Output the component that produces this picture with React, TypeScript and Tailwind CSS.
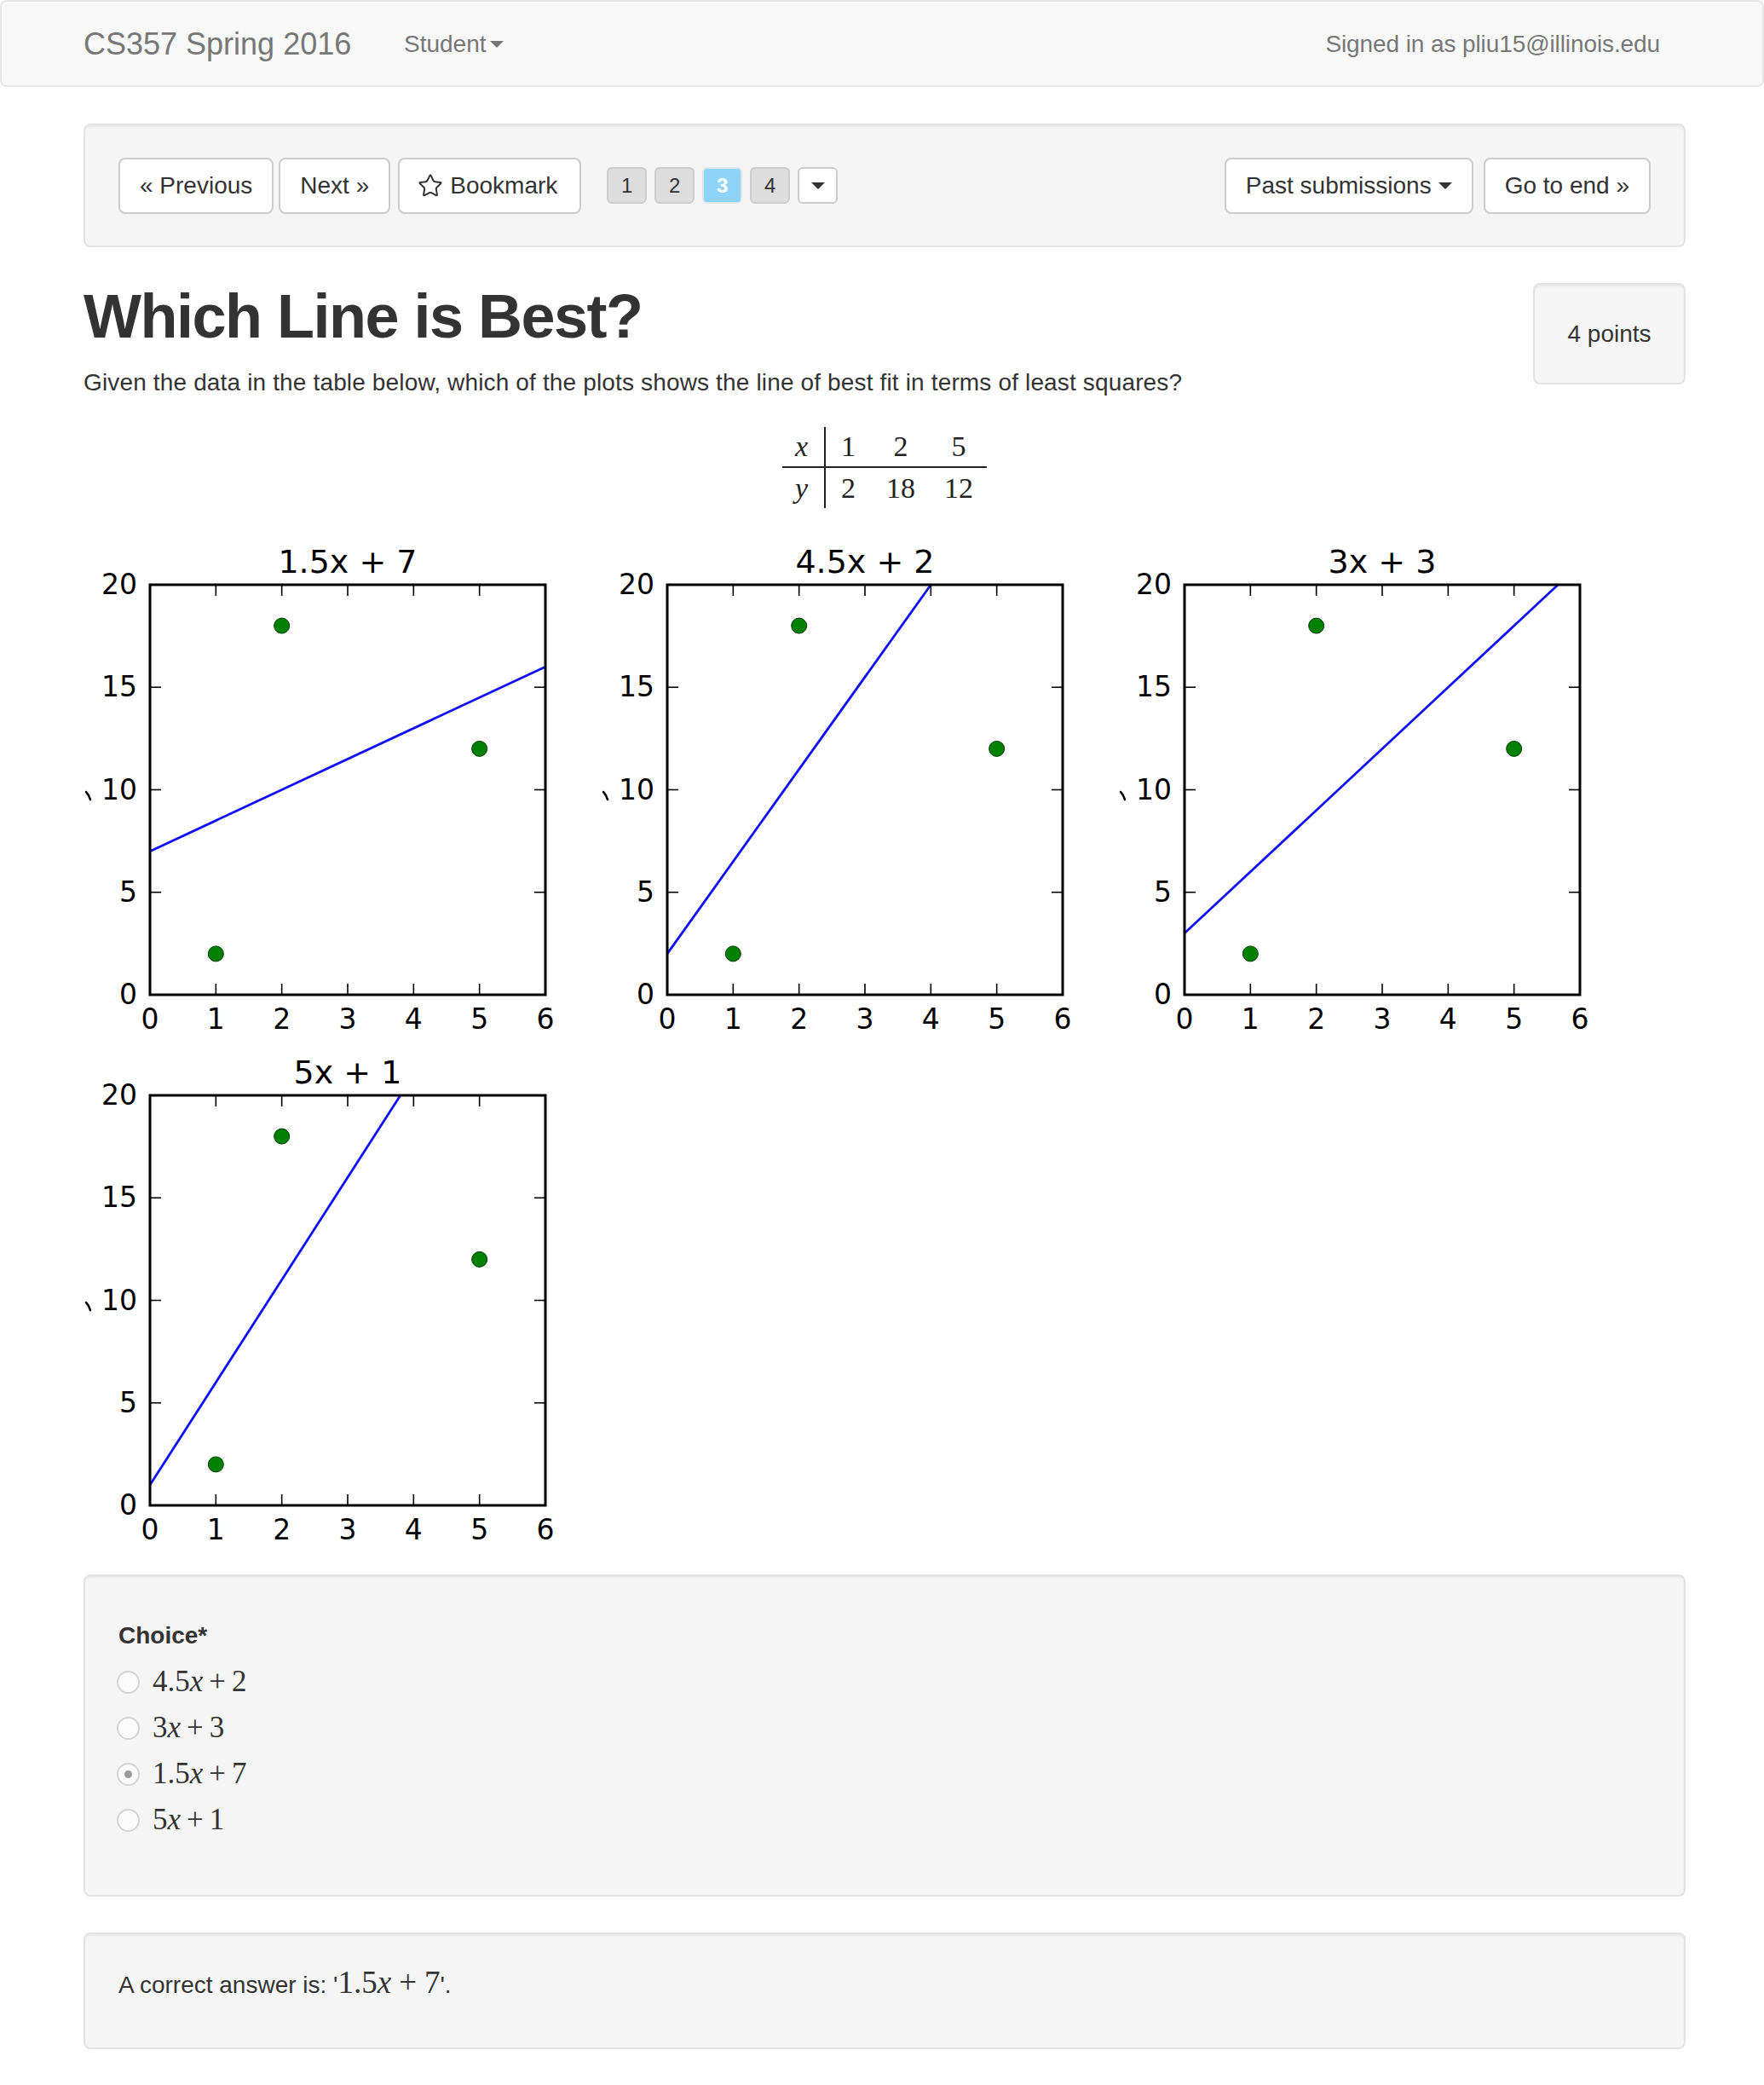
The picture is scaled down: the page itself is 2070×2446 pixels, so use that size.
import { Star } from "lucide-react";

const sans = "font-['Liberation_Sans',Arial,sans-serif]";
const serif = "font-['Liberation_Serif','Times_New_Roman',serif]";

// axes box inside each plot image (image is 607 x 599)
const AX = { x0: 78, x1: 542, y0: 58, y1: 539 };
const sx = (x: number) => AX.x0 + (x / 6) * (AX.x1 - AX.x0);
const sy = (y: number) => AX.y1 - (y / 20) * (AX.y1 - AX.y0);
const data = [
  [1, 2],
  [2, 18],
  [5, 12],
];

function Plot({ title, m, b }: { title: string; m: number; b: number }) {
  const xEnd = Math.min(6, (20 - b) / m);
  const font = "DejaVu Sans, sans-serif";
  return (
    <svg width={607} height={599} viewBox="0 0 607 599" className="block shrink-0">
      <text x={310} y={44} textAnchor="middle" fontSize={38} fontFamily={font} fill="#000">
        {title}
      </text>
      <rect x={AX.x0} y={AX.y0} width={AX.x1 - AX.x0} height={AX.y1 - AX.y0} fill="#fff" />
      <line x1={sx(0)} y1={sy(b)} x2={sx(xEnd)} y2={sy(m * xEnd + b)} stroke="#1010ff" strokeWidth={2.8} />
      {data.map(([x, y]) => (
        <circle key={x} cx={sx(x)} cy={sy(y)} r={9} fill="#008000" stroke="#003a00" strokeWidth={1} />
      ))}
      {[0, 1, 2, 3, 4, 5, 6].map((t) => (
        <g key={"x" + t}>
          <line x1={sx(t)} y1={AX.y1} x2={sx(t)} y2={AX.y1 - 13} stroke="#000" strokeWidth={1.6} />
          <line x1={sx(t)} y1={AX.y0} x2={sx(t)} y2={AX.y0 + 13} stroke="#000" strokeWidth={1.6} />
          <text x={sx(t)} y={579} textAnchor="middle" fontSize={33} fontFamily={font} fill="#000">
            {t}
          </text>
        </g>
      ))}
      {[0, 5, 10, 15, 20].map((t) => (
        <g key={"y" + t}>
          <line x1={AX.x0} y1={sy(t)} x2={AX.x0 + 13} y2={sy(t)} stroke="#000" strokeWidth={1.6} />
          <line x1={AX.x1} y1={sy(t)} x2={AX.x1 - 13} y2={sy(t)} stroke="#000" strokeWidth={1.6} />
          <text x={63} y={sy(t) + 11} textAnchor="end" fontSize={33} fontFamily={font} fill="#000">
            {t}
          </text>
        </g>
      ))}
      <rect
        x={AX.x0}
        y={AX.y0}
        width={AX.x1 - AX.x0}
        height={AX.y1 - AX.y0}
        fill="none"
        stroke="#000"
        strokeWidth={3}
      />
      {/* clipped y label */}
      <path d="M3 301 Q6 304 8 310" stroke="#000" strokeWidth={2.5} fill="none" strokeLinecap="round" />
    </svg>
  );
}

function Caret({ className = "" }: { className?: string }) {
  return (
    <span
      className={`inline-block h-0 w-0 border-x-[8px] border-t-[8px] border-x-transparent border-t-current ${className}`}
    />
  );
}

function Btn({ children, className = "" }: { children: React.ReactNode; className?: string }) {
  return (
    <button
      className={`flex h-[66px] items-center rounded-[8px] border-2 border-[#ccc] bg-white px-[23px] text-[28px] leading-[40px] text-[#333] ${className}`}
    >
      {children}
    </button>
  );
}

function Expr({ a, tail, big = false }: { a: string; tail: string; big?: boolean }) {
  return (
    <span className={`${serif} text-[#333] ${big ? "text-[37px]" : "text-[35px]"}`}>
      {a}
      <i>x</i>
      <span className={big ? "mx-[9px]" : "mx-[7px]"}>+</span>
      {tail}
    </span>
  );
}

const choices = [
  { a: "4.5", t: "2", checked: false },
  { a: "3", t: "3", checked: false },
  { a: "1.5", t: "7", checked: true },
  { a: "5", t: "1", checked: false },
];

export default function App() {
  return (
    <div className={`${sans} min-h-[2446px] bg-white text-[#333]`}>
      {/* Navbar */}
      <nav className="flex h-[102px] items-center rounded-[8px] border-2 border-[#e7e7e7] bg-[#f8f8f8] pl-[96px] pr-[120px] pt-[2px] text-[#777]">
        <span className="w-[376px] text-[36px]">CS357 Spring 2016</span>
        <span className="flex items-center text-[28px]">
          Student
          <Caret className="ml-[4px]" />
        </span>
        <span className="ml-auto text-[28px] tracking-[-0.1px]">Signed in as pliu15@illinois.edu</span>
      </nav>

      <div className="ml-[98px] w-[1880px] pb-[42px]">
        {/* Toolbar */}
        <div className="mt-[43px] flex h-[145px] items-center rounded-[8px] border-2 border-[#e3e3e3] bg-[#f5f5f5] px-[39px] shadow-[inset_0_2px_2px_rgba(0,0,0,0.05)]">
          <Btn>« Previous</Btn>
          <Btn className="ml-[6px]">Next »</Btn>
          <Btn className="ml-[9px] gap-[8px] pr-[26px]">
            <Star size={30} strokeWidth={1.6} className="-ml-[2px]" />
            Bookmark
          </Btn>
          <div className="ml-[30px] flex gap-[9px] text-[24px]">
            {["1", "2", "3", "4"].map((n) =>
              n === "3" ? (
                <span
                  key={n}
                  className="flex h-[43px] w-[47px] items-center justify-center rounded-[6px] border-2 border-[#dde6ea] bg-[#8ed3f8] font-bold text-white"
                >
                  {n}
                </span>
              ) : (
                <span
                  key={n}
                  className="flex h-[43px] w-[47px] items-center justify-center rounded-[6px] border-2 border-[#ccc] bg-[#ddd] text-[#333]"
                >
                  {n}
                </span>
              )
            )}
            <span className="flex h-[43px] w-[47px] items-center justify-center rounded-[6px] border-2 border-[#ccc] bg-white text-[#333]">
              <Caret />
            </span>
          </div>
          <div className="ml-auto flex gap-[12px]">
            <Btn>
              Past submissions
              <Caret className="ml-[8px]" />
            </Btn>
            <Btn>Go to end »</Btn>
          </div>
        </div>

        {/* Question header */}
        <div className="mt-[42px] flex items-start">
          <div className="flex-1">
            <h1 className="text-[72px] font-bold leading-[79px] tracking-[-1.5px] text-[#333]">
              Which Line is Best?
            </h1>
            <p className="mt-[18px] text-[28px] leading-[40px] tracking-[0.15px]">
              Given the data in the table below, which of the plots shows the line of best fit in terms of least
              squares?
            </p>
          </div>
          <div className="flex h-[119px] w-[179px] items-center justify-center rounded-[8px] border-2 border-[#e3e3e3] bg-[#f5f5f5] text-[28px] shadow-[inset_0_2px_2px_rgba(0,0,0,0.05)]">
            4 points
          </div>
        </div>

        {/* Data table */}
        <table className={`${serif} mx-auto mt-[32px] border-collapse text-[34px] leading-none text-[#222]`}>
          <tbody>
            <tr className="h-[47px]">
              <td className="w-[50px] border-b-2 border-r-2 border-[#222] pr-[4px] text-center italic">x</td>
              <td className="w-[54px] border-b-2 border-[#222] text-center">1</td>
              <td className="w-[70px] border-b-2 border-[#222] text-center">2</td>
              <td className="w-[66px] border-b-2 border-[#222] text-center">5</td>
            </tr>
            <tr className="h-[48px]">
              <td className="border-r-2 border-[#222] pr-[4px] text-center italic">y</td>
              <td className="text-center">2</td>
              <td className="text-center">18</td>
              <td className="text-center">12</td>
            </tr>
          </tbody>
        </table>

        {/* Plots */}
        <div className="mt-[32px] flex flex-wrap">
          <Plot title="1.5x + 7" m={1.5} b={7} />
          <Plot title="4.5x + 2" m={4.5} b={2} />
          <Plot title="3x + 3" m={3} b={3} />
          <Plot title="5x + 1" m={5} b={1} />
        </div>

        {/* Choices */}
        <div className="mt-[21px] h-[378px] rounded-[8px] border-2 border-[#e3e3e3] bg-[#f5f5f5] pl-[39px] pt-[50px] shadow-[inset_0_2px_2px_rgba(0,0,0,0.05)]">
          <div className="text-[28px] font-bold leading-[40px]">Choice*</div>
          <div className="mt-[7px]">
            {choices.map((c) => (
              <div key={c.a} className="flex h-[54px] items-center">
                <span className="-ml-[2px] flex h-[27px] w-[27px] items-center justify-center rounded-full border-2 border-[#d4d4d4] bg-[#fbfbfb]">
                  {c.checked && <span className="h-[9px] w-[9px] rounded-full bg-[#9a9a9a]" />}
                </span>
                <span className="ml-[15px]">
                  <Expr a={c.a} tail={c.t} />
                </span>
              </div>
            ))}
          </div>
        </div>

        {/* Answer */}
        <div className="mt-[42px] h-[137px] rounded-[8px] border-2 border-[#e3e3e3] bg-[#f5f5f5] pl-[39px] pt-[37px] text-[28px] leading-[40px] shadow-[inset_0_2px_2px_rgba(0,0,0,0.05)]">
          A correct answer is: '<Expr a="1.5" tail="7" big />'.
        </div>
      </div>
    </div>
  );
}
